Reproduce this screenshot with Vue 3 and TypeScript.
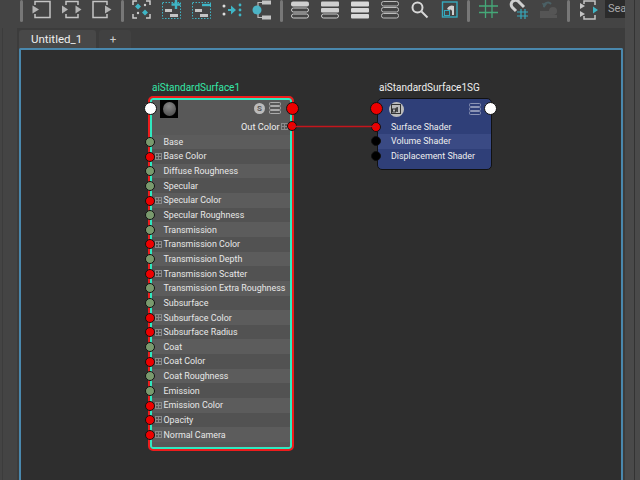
<template>
  <div class="app">
    <div class="toolbar">
      <template v-for="(grupo, g) in grupos" :key="g">
        <span class="sep" :style="{ marginLeft: grupo.sepGap + 'px' }"></span>
        <div class="grupo" :style="{ marginLeft: grupo.left + 'px' }">
          <svg v-for="ic in grupo.icons" :key="ic" class="ico" width="20" height="20" viewBox="0 0 20 20" fill="none">
            <template v-if="ic === 'in'">
              <path d="M3 5V1.500h15v16H3V14" stroke="#c4c4c4" stroke-width="1.500" /><path d="M0.500 5.500l6.500 4-6.500 4z" fill="#b4b4b4" />
            </template>
            <template v-else-if="ic === 'both'">
              <path d="M4 5V1.500h12V5M4 14v3.500h12V14" stroke="#c4c4c4" stroke-width="1.500" /><path d="M0 5.500l6 4-6 4zM13.500 5.500l6 4-6 4z" fill="#b4b4b4" />
            </template>
            <template v-else-if="ic === 'out'">
              <path d="M15 5V1.500H1v16h14V14" stroke="#c4c4c4" stroke-width="1.500" /><path d="M13 5.500l6.500 4-6.500 4z" fill="#b4b4b4" />
            </template>
            <template v-else-if="ic === 'frame'">
              <path d="M1 5V1h4M14 1h4v4M18 14v4h-4M5 18H1v-4" stroke="#ccc" stroke-width="1.500" /><path d="M6 3.500l3 3-3 3-3-3zM13 9.500l3 3-3 3-3-3z" fill="#3fb5c5" /><circle cx="13" cy="5" r="1.200" fill="#ccc" /><circle cx="6" cy="13" r="1.200" fill="#ccc" />
            </template>
            <template v-else-if="ic === 'add'">
              <rect x="0.500" y="2.500" width="18" height="16" stroke="#3fb5c5" stroke-dasharray="1.500 1.500" /><path d="M14 0v9M9.500 4.500h9" stroke="#3fb5c5" stroke-width="2.400" /><path d="M3 9h7v3H3zM8 14h8v3H8z" fill="#c4c4c4" />
            </template>
            <template v-else-if="ic === 'remove'">
              <rect x="0.500" y="2.500" width="18" height="16" stroke="#3fb5c5" stroke-dasharray="1.500 1.500" /><path d="M10 5h9" stroke="#3fb5c5" stroke-width="2.400" /><path d="M3 9h7v3H3zM8 14h8v3H8z" fill="#c4c4c4" />
            </template>
            <template v-else-if="ic === 'flow'">
              <path d="M6 10h5" stroke="#3fb5c5" stroke-width="2" /><path d="M9 5.500l5 4.500-5 4.500z" fill="#3fb5c5" /><circle cx="2" cy="6" r="1.500" fill="#ddd" /><circle cx="2" cy="14" r="1.500" fill="#ddd" /><circle cx="18" cy="5" r="1.400" fill="#3fb5c5" /><circle cx="18" cy="10" r="1.400" fill="#3fb5c5" /><circle cx="18" cy="15" r="1.400" fill="#3fb5c5" />
            </template>
            <template v-else-if="ic === 'tree'">
              <path d="M6 6V2.500h4M6 14v3.500h4" stroke="#bbb" stroke-width="1.200" /><circle cx="5" cy="10" r="4.500" fill="#4cb4c6" /><path d="M10 0.500h9v4h-9zM10 15.500h9v4h-9z" fill="#c4c4c4" />
            </template>
            <template v-else-if="ic === 'l1'">
              <rect x="1" y="1.500" width="18" height="5" rx="2" fill="#d0d0d0" /><rect x="1.500" y="8" width="17" height="4" rx="2" stroke="#ccc" /><rect x="1.500" y="14" width="17" height="4" rx="2" stroke="#ccc" />
            </template>
            <template v-else-if="ic === 'l2'">
              <rect x="1" y="1.500" width="18" height="5" rx="1" fill="#d0d0d0" /><rect x="1" y="8" width="18" height="4.500" rx="1" fill="#d0d0d0" /><rect x="1.500" y="14" width="17" height="4" rx="2" stroke="#ccc" />
            </template>
            <template v-else-if="ic === 'l3'">
              <rect x="1" y="1.500" width="18" height="5" rx="1" fill="#d8d8d8" /><rect x="1" y="8" width="18" height="4.500" rx="1" fill="#d8d8d8" /><rect x="1" y="14" width="18" height="4.500" rx="1" fill="#d8d8d8" />
            </template>
            <template v-else-if="ic === 'l4'">
              <rect x="1.500" y="1.500" width="17" height="4.500" rx="2" stroke="#bbb" /><rect x="1.500" y="7.500" width="17" height="4.500" rx="2" stroke="#bbb" /><rect x="1.500" y="13.500" width="17" height="4.500" rx="2" stroke="#bbb" />
            </template>
            <template v-else-if="ic === 'search'">
              <circle cx="7.500" cy="7.500" r="5" stroke="#d8d8d8" stroke-width="2" /><path d="M11.500 11.500l6 6" stroke="#d8d8d8" stroke-width="2" />
            </template>
            <template v-else-if="ic === 'swatch'">
              <rect x="2.500" y="2" width="14.500" height="15" stroke="#36a9bd" stroke-width="1.400" /><path d="M7 9a5 5 0 0 1 7-3v9h-2v-4a2 2 0 0 0-3-1z" fill="#d0d0d0" /><rect x="4.500" y="10.500" width="5" height="5" stroke="#36a9bd" />
            </template>
            <template v-else-if="ic === 'grid'">
              <path d="M6.500 0v18M13 0v18M0 6h19M0 12.500h19" stroke="#45a878" stroke-width="1.300" />
            </template>
            <template v-else-if="ic === 'magnet'">
              <path d="M7 11L3 7a4.300 4.300 0 0 1 7-5l5 5" stroke="#d0d0d0" stroke-width="3" /><path d="M12 9v10M16 9v10M8 12h11M8 16h11" stroke="#36a9bd" stroke-width="1.200" />
            </template>
            <template v-else-if="ic === 'hist'">
              <path d="M1 11h12v4h5v3H1z" fill="#555" /><circle cx="14" cy="11" r="4" fill="#555" /><path d="M5 7a4 4 0 0 1 7-3" stroke="#4b6065" stroke-width="2" /><path d="M3 3l5 1-3 4z" fill="#4b6065" />
            </template>
            <template v-else-if="ic === 'io'">
              <path d="M5 4V1h11v4M5 16v3h11v-4" stroke="#c4c4c4" stroke-width="1.500" /><path d="M1 3l5 3-5 3zM1 11l5 3-5 3z" fill="#c4c4c4" /><path d="M14 6.500l5 3.500-5 3.500z" fill="#3fb5c5" />
            </template>
          </svg>
        </div>
      </template>
      <div class="busca">Sea</div>
    </div>

    <div class="corpo">
      <div class="faixa-esq"></div>
      <div class="painel">
        <div class="abas">
          <div class="aba ativa">Untitled_1</div>
          <div class="aba mais">+</div>
        </div>

        <div class="canvas">
          <div class="no-titulo verde no1-titulo">aiStandardSurface1</div>
          <div class="no no1">
            <div class="no-topo">
              <div class="preview"><span class="esfera"></span></div>
              <span class="s-badge">S</span>
              <svg class="lista" width="12" height="12" viewBox="0 0 12 12" fill="none">
                <rect x="0.500" y="0.500" width="11" height="3" rx="1" stroke="#aaa" />
                <rect x="0.500" y="4.500" width="11" height="3" rx="1" stroke="#aaa" />
                <rect x="0.500" y="8.500" width="11" height="3" rx="1" stroke="#aaa" />
              </svg>
            </div>
            <div class="saida">
              <span>Out Color</span>
              <span class="mais-box"></span>
            </div>
            <div
              v-for="(attr, i) in atributos"
              :key="attr.nome"
              class="linha"
              :class="{ par: i % 2 === 1 }"
            >
              <span v-if="attr.cor" class="mais-box"></span>
              <span class="rotulo" :class="{ recuo: !attr.cor }">{{ attr.nome }}</span>
              <span class="porta" :class="attr.cor ? 'vermelha' : 'oliva'"></span>
            </div>
            <span class="porta grande branca p-in"></span>
            <span class="porta grande vermelha p-out"></span>
            <span class="porta vermelha p-cor"></span>
          </div>

          <div class="no-titulo no2-titulo">aiStandardSurface1SG</div>
          <div class="no no2">
            <div class="topo-sg">
              <span class="sg-ico">
                <svg width="10" height="10" viewBox="0 0 10 10" fill="none">
                  <rect x="0.500" y="0.500" width="9" height="9" stroke="#333" />
                  <rect x="1.500" y="5" width="3" height="3" stroke="#333" />
                  <path d="M4 5a3 3 0 0 1 3-2v5H5.500z" fill="#444" />
                </svg>
              </span>
              <svg class="lista" width="12" height="12" viewBox="0 0 12 12" fill="none">
                <rect x="0.500" y="0.500" width="11" height="3" rx="1" stroke="#8b94b4" />
                <rect x="0.500" y="4.500" width="11" height="3" rx="1" stroke="#8b94b4" />
                <rect x="0.500" y="8.500" width="11" height="3" rx="1" stroke="#8b94b4" />
              </svg>
            </div>
            <div
              v-for="(s, i) in shaders"
              :key="s.nome"
              class="linha sg"
              :class="{ meio: i === 1 }"
            >
              <span class="rotulo">{{ s.nome }}</span>
              <span class="porta" :class="s.ligado ? 'vermelha' : 'preta'"></span>
            </div>
            <span class="porta grande vermelha p-in"></span>
            <span class="porta grande branca p-out"></span>
          </div>

          <svg class="fio" width="84" height="4" viewBox="0 0 84 4"><path d="M0 1.500h84" stroke="#c4161c" stroke-width="1.500" /></svg>
        </div>
      </div>
      <div class="faixa-dir"></div>
    </div>
  </div>
</template>

<script setup lang="ts">
// grupos da barra de ferramentas
const grupos = [
  { sepGap: 20, left: 9, icons: ['in', 'both', 'out'] },
  { sepGap: 9, left: 8, icons: ['frame', 'add', 'remove', 'flow', 'tree'] },
  { sepGap: 8, left: 7, icons: ['l1', 'l2', 'l3', 'l4', 'search', 'swatch'] },
  { sepGap: 7, left: 9, icons: ['grid', 'magnet', 'hist'] },
  { sepGap: 8, left: 9, icons: ['io'] },
]

// atributos do aiStandardSurface (cor = tem porta vermelha)
const atributos = [
  { nome: 'Base', cor: false },
  { nome: 'Base Color', cor: true },
  { nome: 'Diffuse Roughness', cor: false },
  { nome: 'Specular', cor: false },
  { nome: 'Specular Color', cor: true },
  { nome: 'Specular Roughness', cor: false },
  { nome: 'Transmission', cor: false },
  { nome: 'Transmission Color', cor: true },
  { nome: 'Transmission Depth', cor: false },
  { nome: 'Transmission Scatter', cor: true },
  { nome: 'Transmission Extra Roughness', cor: false },
  { nome: 'Subsurface', cor: false },
  { nome: 'Subsurface Color', cor: true },
  { nome: 'Subsurface Radius', cor: true },
  { nome: 'Coat', cor: false },
  { nome: 'Coat Color', cor: true },
  { nome: 'Coat Roughness', cor: false },
  { nome: 'Emission', cor: false },
  { nome: 'Emission Color', cor: true },
  { nome: 'Opacity', cor: true },
  { nome: 'Normal Camera', cor: true },
]

const shaders = [
  { nome: 'Surface Shader', ligado: true },
  { nome: 'Volume Shader', ligado: false },
  { nome: 'Displacement Shader', ligado: false },
]
</script>

<style scoped>
.app {
  width: 640px;
  height: 480px;
  overflow: hidden;
  background: #444;
  font-family: Roboto, "Liberation Sans", sans-serif;
  display: flex;
  flex-direction: column;
}

.toolbar {
  height: 28px;
  flex: none;
  display: flex;
  align-items: flex-start;
  box-sizing: border-box;
}
.sep {
  width: 3px;
  height: 22px;
  background: #777;
  border-radius: 2px;
  flex: none;
}
.grupo {
  display: flex;
  gap: 10px;
}
.ico {
  flex: none;
  display: block;
}
.busca {
  margin-left: 6px;
  width: 21px;
  height: 18px;
  box-sizing: border-box;
  background: #2b2b2b;
  color: #aaa;
  font-size: 11px;
  line-height: 18px;
  padding-left: 3px;
  overflow: hidden;
  white-space: nowrap;
}

.corpo {
  flex: 1;
  display: flex;
  min-height: 0;
}
.faixa-esq {
  width: 17px;
  flex: none;
  box-sizing: border-box;
  border-left: 1px solid #3c3c3c;
  margin-left: 2px;
  margin-right: -2px;
}
.faixa-dir {
  width: 15px;
  flex: none;
  margin-top: -28px;
  background: #4a4a4a;
  position: relative;
}
.faixa-dir::after {
  content: "";
  position: absolute;
  top: 0;
  bottom: 0;
  left: 9px;
  width: 1px;
  background: #333;
}

.painel {
  width: 608px;
  flex: none;
  background: #3c3c3c;
  display: flex;
  flex-direction: column;
  min-height: 0;
}
.abas {
  height: 20px;
  flex: none;
  display: flex;
  gap: 3px;
  padding-left: 2px;
  padding-top: 2px;
  box-sizing: border-box;
}
.aba {
  background: #484848;
  color: #eee;
  font-size: 11.500px;
  line-height: 19px;
  border-radius: 3px 3px 0 0;
}
.ativa {
  width: 77px;
  padding-left: 12px;
  box-sizing: border-box;
}
.mais {
  width: 32px;
  box-sizing: border-box;
  padding-right: 4px;
  text-align: center;
  background: #414141;
  color: #ccc;
}

.canvas {
  position: relative;
  flex: 1;
  background: #2e2e2e;
  border: 2px solid #4a88ad;
  border-bottom: 0;
  border-radius: 2px 2px 0 0;
  margin: 0 2px;
}

.no-titulo {
  position: absolute;
  font-size: 10px;
  color: #f0f0f0;
  line-height: 12px;
}
.verde {
  color: #35e8a8;
}
.no1-titulo {
  left: 131px;
  top: 32px;
}
.no2-titulo {
  left: 358px;
  top: 32px;
}

.no {
  position: absolute;
  box-sizing: border-box;
}
.no1 {
  left: 127px;
  top: 46px;
  width: 146px;
  height: 355px;
  background: #585858;
  border: 2px solid #ee1c1c;
  border-radius: 5px;
  box-shadow: inset 0 0 0 2px #30e8c0;
  padding: 2px;
}
.no2 {
  left: 355.500px;
  top: 47.500px;
  width: 115px;
  height: 72px;
  background: #2f3f78;
  border: 1px solid #111;
  border-radius: 5px;
}

.no-topo {
  height: 19px;
  display: flex;
  align-items: flex-start;
  padding: 0 0 0 8px;
}
.preview {
  width: 18px;
  height: 18px;
  background: #000;
  display: flex;
  align-items: center;
  justify-content: center;
}
.esfera {
  width: 13px;
  height: 14px;
  border-radius: 50%;
  background: radial-gradient(circle at 45% 30%, #888, #444);
}
.s-badge {
  width: 11px;
  height: 11px;
  margin-top: 3px;
  border-radius: 50%;
  background: #bbb;
  color: #555;
  font-size: 8px;
  font-weight: 700;
  line-height: 11px;
  text-align: center;
  margin-left: auto;
}
.lista {
  margin-top: 2px;
  margin-left: 4px;
  margin-right: 9px;
  flex: none;
}

.saida {
  height: 15.500px;
  display: flex;
  justify-content: flex-end;
  align-items: center;
  gap: 1.500px;
  padding-right: 2px;
  font-size: 9.200px;
  color: #eee;
}

.linha {
  height: 14.650px;
  display: flex;
  align-items: center;
  position: relative;
  font-size: 8.900px;
  color: #e8e8e8;
  background: #5c5c5c;
  padding-left: 3px;
}
.linha.par {
  background: #525252;
}
.rotulo {
  white-space: nowrap;
}
.recuo {
  margin-left: 8.500px;
}
.mais-box {
  width: 7px;
  height: 7px;
  flex: none;
  box-sizing: border-box;
  border: 1px solid #8a8a8a;
  background:
    linear-gradient(#8a8a8a, #8a8a8a) center / 1px 100% no-repeat,
    linear-gradient(#8a8a8a, #8a8a8a) center / 100% 1px no-repeat;
  margin-right: 1.500px;
}
.saida .mais-box {
  margin-right: 0;
}

.porta {
  position: absolute;
  width: 10px;
  height: 10px;
  left: -7px;
  top: 2.500px;
  border-radius: 50%;
  box-sizing: border-box;
  border: 1px solid #111;
}
.oliva {
  background: #7a9a6e;
}
.vermelha {
  background: #ee0000;
}
.preta {
  background: #000;
}
.branca {
  background: #fff;
}
.grande {
  width: 13px;
  height: 13px;
}
.no1 > .p-in {
  left: -6.500px;
  top: 3.500px;
}
.no1 > .p-out {
  left: auto;
  right: -6.500px;
  top: 3.500px;
}
.no2 > .p-in {
  left: -8px;
  top: 3.500px;
}
.no2 > .p-out {
  left: auto;
  right: -6.500px;
  top: 3.500px;
}
.no1 > .p-cor {
  left: auto;
  right: -5px;
  top: 23px;
}

.topo-sg {
  height: 21.500px;
  display: flex;
  align-items: center;
  justify-content: space-between;
  padding-left: 11px;
}
.topo-sg .lista {
  margin-top: 0;
  margin-right: 10px;
}
.sg-ico {
  width: 15px;
  height: 15px;
  border-radius: 50%;
  background: #bbb;
  display: flex;
  align-items: center;
  justify-content: center;
}
.linha.sg {
  background: transparent;
  color: #eee;
  padding-left: 13.500px;
  height: 14.300px;
}
.linha.sg.meio {
  background: #3a4a84;
}
.linha.sg .porta {
  left: -6.500px;
  top: 2px;
}

.fio {
  position: absolute;
  left: 271px;
  top: 75px;
}
</style>

<style>
html,
body {
  margin: 0;
  background: #444;
}
</style>
